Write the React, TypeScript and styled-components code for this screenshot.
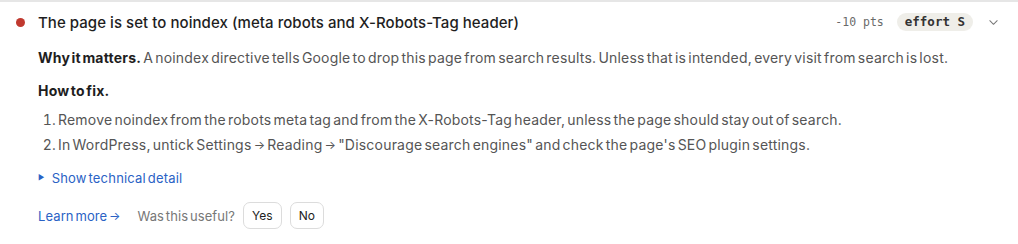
import React from "react";
import styled, { createGlobalStyle } from "styled-components";

const Global = createGlobalStyle`
  html, body { margin: 0; padding: 0; background: #ffffff; }
  body { font-family: Inter, "Noto Sans", sans-serif; color: #222; }
`;

const Card = styled.section`
  width: 1018px;
  height: 244px;
  box-sizing: border-box;
  border-top: 2px solid #e6e6e6;
  background: #fff;
`;

const Header = styled.div`
  display: flex;
  align-items: center;
  height: 40px;
  padding: 0 19px 0 16px;
  box-sizing: border-box;
`;

const Dot = styled.span`
  width: 9px;
  height: 9px;
  border-radius: 50%;
  background: #c0392f;
  flex: none;
  margin-right: 13px;
`;

const Title = styled.h3`
  margin: 0;
  flex: 1;
  font-size: 15px;
  font-weight: 500;
  color: #1e1e1e;
  letter-spacing: 0.05px;
`;

const Points = styled.span`
  font-family: "DejaVu Sans Mono", "Liberation Mono", monospace;
  font-size: 11.5px;
  color: #6a6a6a;
  margin-right: 13px;
`;

const Badge = styled.span`
  font-family: "DejaVu Sans Mono", "Liberation Mono", monospace;
  font-size: 12.5px;
  font-weight: 700;
  line-height: 18px;
  color: #333;
  background: #efeee9;
  border-radius: 9px;
  padding: 0 8px;
  margin-right: 15px;
`;

const Chevron = styled.svg`
  width: 11px;
  height: 11px;
  color: #777;
`;

const Body = styled.div`
  padding: 0 0 0 38px;
  display: flex;
  flex-direction: column;
  letter-spacing: 0.2px;
  word-spacing: -2px;
`;

const Para = styled.p`
  margin: 6px 0 0;
  font-size: 14px;
  line-height: 20px;
  color: #555;
`;

const Strong = styled.strong`
  font-weight: 700;
  color: #1e1e1e;
`;

const SubHead = styled.h4`
  margin: 13px 0 0;
  font-size: 14px;
  line-height: 20px;
  font-weight: 700;
  color: #1e1e1e;
`;

const Steps = styled.ol`
  margin: 9px 0 0;
  padding: 0 0 0 20px;
  font-size: 14px;
  line-height: 20px;
  color: #555;
  li { margin-bottom: 5px; }
  li::marker { color: #555; }
`;

const Arrow = styled.span`
  font-size: 12px;
  letter-spacing: 0;
  position: relative;
  top: -1px;
`;

const Detail = styled.div`
  margin-top: 7px;
  display: flex;
  align-items: center;
  gap: 7px;
  font-size: 13px;
  line-height: 20px;
  color: #2a62c5;
`;

const Tri = styled.span`
  font-size: 7px;
  color: #2a62c5;
`;

const Footer = styled.div`
  margin-top: 14px;
  display: flex;
  align-items: center;
  font-size: 13px;
  letter-spacing: 0.1px;
`;

const Link = styled.a`
  color: #2a62c5;
  text-decoration: none;
  margin-right: 17px;
`;

const Ask = styled.span`
  color: #777;
  margin-right: 8px;
`;

const Btn = styled.button`
  font-family: inherit;
  font-size: 12px;
  letter-spacing: 0;
  color: #222;
  background: #fff;
  border: 1px solid #dcdcdc;
  border-radius: 7px;
  height: 27px;
  padding: 0 8px;
  margin-right: 8px;
  cursor: pointer;
`;

export default function App() {
  return (
    <>
      <Global />
      <Card>
        <Header>
          <Dot />
          <Title>The page is set to noindex (meta robots and X-Robots-Tag header)</Title>
          <Points>-10 pts</Points>
          <Badge>effort S</Badge>
          <Chevron viewBox="0 0 24 24" fill="none" stroke="currentColor" strokeWidth="2.2" strokeLinecap="round" strokeLinejoin="round">
            <path d="M4 8l8 8 8-8" />
          </Chevron>
        </Header>
        <Body>
          <Para>
            <Strong>Why it matters.</Strong> A noindex directive tells Google to drop this page from search results. Unless that is intended, every visit from search is lost.
          </Para>
          <SubHead>How to fix.</SubHead>
          <Steps>
            <li>Remove noindex from the robots meta tag and from the X-Robots-Tag header, unless the page should stay out of search.</li>
            <li>In WordPress, untick Settings <Arrow>→</Arrow> Reading <Arrow>→</Arrow> "Discourage search engines" and check the page's SEO plugin settings.</li>
          </Steps>
          <Detail>
            <Tri>▶</Tri>
            Show technical detail
          </Detail>
          <Footer>
            <Link href="#">Learn more <Arrow>→</Arrow></Link>
            <Ask>Was this useful?</Ask>
            <Btn>Yes</Btn>
            <Btn>No</Btn>
          </Footer>
        </Body>
      </Card>
    </>
  );
}
